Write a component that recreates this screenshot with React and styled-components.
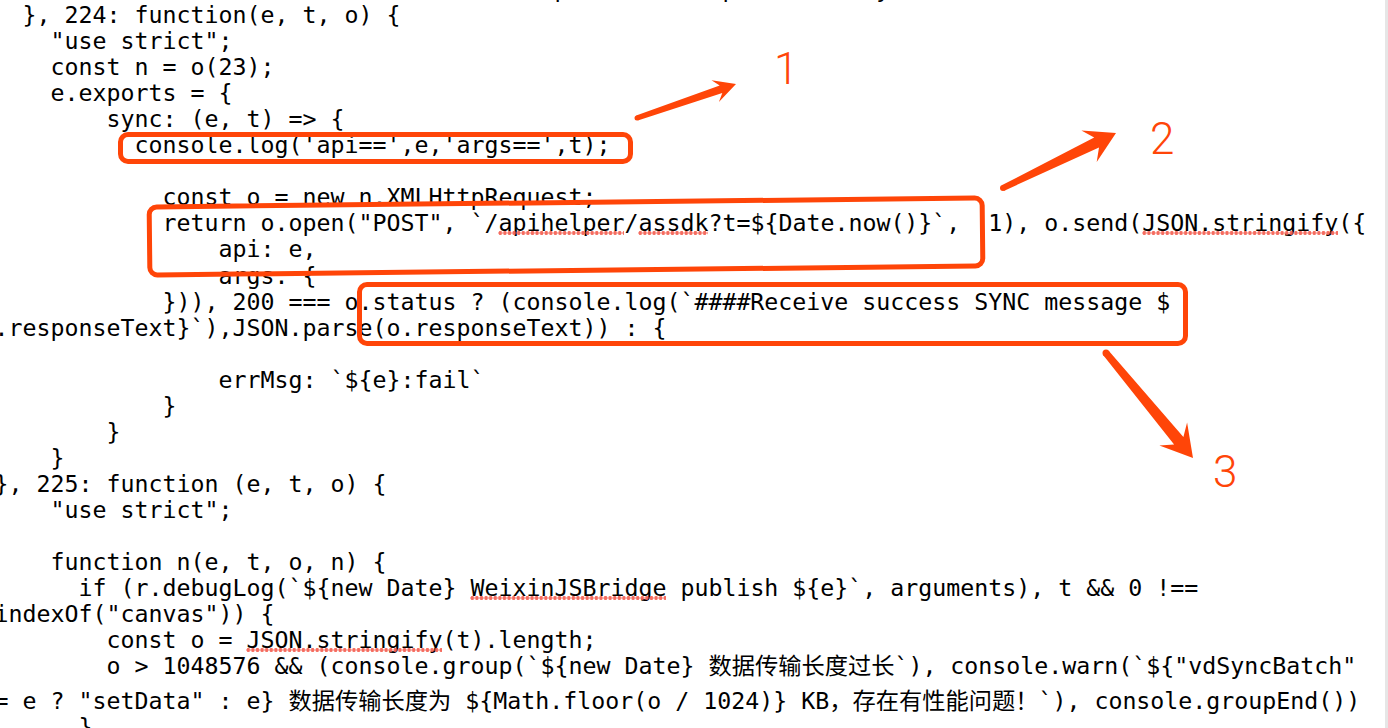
import React from 'react';
import styled, { createGlobalStyle } from 'styled-components';

const RED = '#ff4508';

const GlobalStyle = createGlobalStyle`
  html, body {
    margin: 0;
    padding: 0;
    background: #fff;
  }
`;

const Page = styled.div`
  position: relative;
  display: flex;
  width: 1388px;
  height: 728px;
  overflow: hidden;
  background: #fff;
`;

const CodePane = styled.div`
  flex: 1;
  overflow: hidden;
`;

const Code = styled.div`
  margin: -24px 0 0 -5.5px;
  font-family: "DejaVu Sans Mono", "Noto Sans CJK SC", monospace;
  font-size: 23.25px;
  color: #000;
`;

const Line = styled.div`
  height: 26.05px;
  line-height: 26px;
  white-space: pre;
  margin-bottom: ${(p) => (p.$gap ? `${p.$gap}px` : '0')};
`;

// spell-check dots under a word
const Squiggle = styled.span`
  position: relative;

  &::after {
    content: '';
    position: absolute;
    left: 0;
    right: 0;
    top: calc(50% + 8px);
    height: 4px;
    background-image: radial-gradient(circle, rgba(244, 92, 78, 0.9) 1.7px, transparent 2.1px);
    background-size: 4.6px 4px;
    background-repeat: repeat-x;
  }
`;

const ScrollEdge = styled.div`
  width: 3px;
  background: #e6e6e6;
`;

const Box = styled.div`
  position: absolute;
  left: ${(p) => p.$left}px;
  top: ${(p) => p.$top}px;
  width: ${(p) => p.$w}px;
  height: ${(p) => p.$h}px;
  box-sizing: border-box;
  border: 5px solid ${RED};
  border-radius: 10px;
  transform: rotate(${(p) => p.$tilt || 0}deg);
`;

const Marker = styled.span`
  position: absolute;
  left: ${(p) => p.$left}px;
  top: ${(p) => p.$top}px;
  font-family: Roboto, "Liberation Sans", sans-serif;
  font-weight: 300;
  font-size: 44px;
  line-height: 1;
  color: ${RED};
`;

const Overlay = styled.svg`
  position: absolute;
  left: 0;
  top: 0;
  pointer-events: none;
`;

const lines = [
  ['   e, t = o.name && o.status, i = o.ext.path && o.tmpath = a.keyNames,'],
  ['  }, 224: function(e, t, o) {'],
  ['    "use strict";'],
  ['    const n = o(23);'],
  ['    e.exports = {'],
  ['        sync: (e, t) => {'],
  ["          console.log('api==',e,'args==',t);"],
  [''],
  ['            const o = new n.XMLHttpRequest;'],
  ['            return o.open("POST", `/~apihelper~/~assdk~?t=${Date.now()}`,  1), o.send(~JSON.stringify~({'],
  ['                api: e,'],
  ['                args: {'],
  ['            })), 200 === o.status ? (console.log(`####Receive success SYNC message $'],
  ['.responseText}`),JSON.parse(o.responseText)) : {'],
  [''],
  ['                errMsg: `${e}:fail`'],
  ['            }'],
  ['        }'],
  ['    }'],
  ['}, 225: function (e, t, o) {'],
  ['    "use strict";'],
  [''],
  ['    function n(e, t, o, n) {'],
  ['      if (r.debugLog(`${new Date} ~WeixinJSBridge~ publish ${e}`, arguments), t && 0 !=='],
  ['indexOf("canvas")) {'],
  ['        const o = ~JSON.stringify~(t).length;'],
  ['        o > 1048576 && (console.group(`${new Date} 数据传输长度过长`), console.warn(`${"vdSyncBatch"', 9],
  ['= e ? "setData" : e} 数据传输长度为 ${Math.floor(o / 1024)} KB，存在有性能问题！`), console.groupEnd())'],
  ['      }'],
];

const renderText = (text) =>
  text.split('~').map((part, i) => (i % 2 ? <Squiggle key={i}>{part}</Squiggle> : part));

const arrowPoints = (a) =>
{
  const { x1, y1, x2, y2, tail, neck, head, len } = a;
  const L = Math.hypot(x2 - x1, y2 - y1);
  const ux = (x2 - x1) / L;
  const uy = (y2 - y1) / L;
  const at = (u, v) => `${(x1 + ux * u - uy * v).toFixed(1)},${(y1 + uy * u + ux * v).toFixed(1)}`;
  return [
    at(0, tail / 2),
    at(L - len * 0.72, neck / 2),
    at(L - len, head / 2),
    at(L, 0),
    at(L - len, -head / 2),
    at(L - len * 0.72, -neck / 2),
    at(0, -tail / 2),
  ].join(' ');
};

const arrows = [
  { x1: 637, y1: 118, x2: 736, y2: 84, tail: 5, neck: 8, head: 23, len: 22 },
  { x1: 1003, y1: 188, x2: 1116, y2: 133, tail: 6, neck: 11, head: 35, len: 30 },
  { x1: 1106, y1: 353, x2: 1193, y2: 458, tail: 7, neck: 12, head: 36, len: 31 },
];

export default function App()
{
  return <>
    <GlobalStyle />
    <Page>
      <CodePane>
        <Code>
          {lines.map(([text, gap], i) => (
            <Line key={i} $gap={gap}>{renderText(text)}</Line>
          ))}
        </Code>
      </CodePane>
      <ScrollEdge />

      <Box $left={118} $top={132} $w={515} $h={32} />
      <Box $left={147} $top={200} $w={838} $h={73} $tilt={-0.62} />
      <Box $left={357} $top={282} $w={831} $h={64} />

      <Overlay width="1388" height="728" viewBox="0 0 1388 728">
        {arrows.map((a, i) => (
          <g key={i} fill={RED}>
            <polygon points={arrowPoints(a)} />
            <circle cx={a.x1} cy={a.y1} r={a.tail / 2} />
          </g>
        ))}
      </Overlay>

      <Marker $left={774} $top={47}>1</Marker>
      <Marker $left={1150} $top={117}>2</Marker>
      <Marker $left={1213} $top={450}>3</Marker>
    </Page>
  </>;
}
